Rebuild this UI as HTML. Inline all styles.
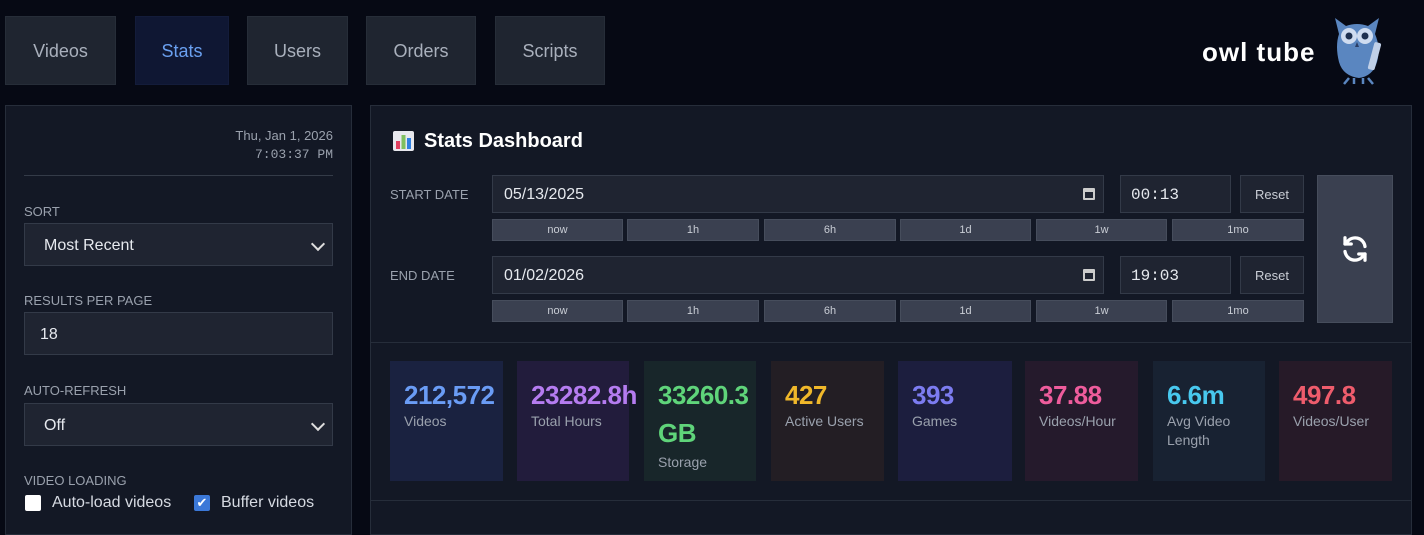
<!DOCTYPE html><html><head><style>
*{box-sizing:border-box;margin:0;padding:0}
body{width:1424px;height:517px;overflow:hidden;background:#060914;font-family:"Liberation Sans",sans-serif;color:#d6dae2;position:relative}
.a{position:absolute}
.nav{position:absolute;top:16px;height:69px;background:#1f2530;border:1px solid #262d38;color:#a9b0bc;font-size:18px;display:flex;align-items:center;justify-content:center;padding-top:2px}
.panel{position:absolute;background:#131825;border:1px solid #262d3a}
.lbl{position:absolute;font-size:13px;color:#9aa1ad;text-transform:uppercase}
.fld{position:absolute;background:#1f2431;border:1px solid #333a48;color:#e6e9ee;font-size:16px;display:flex;align-items:center;padding-left:19px;padding-top:2px}
.chev{position:absolute;right:9px;top:50%;width:10px;height:10px;border-right:2px solid #ddd;border-bottom:2px solid #ddd;transform:translateY(-60%) rotate(45deg)}
.q{position:absolute;height:22px;background:#3a4050;border:1px solid #464d5c;color:#c9cdd5;font-size:11px;display:flex;align-items:center;justify-content:center}
.btn{position:absolute;background:#1f2431;border:1px solid #333a48;color:#c9cdd5;font-size:13px;display:flex;align-items:center;justify-content:center}
.card{position:absolute;top:361px;height:120px;padding:18px 0 0 14px}
.card b{display:block;font-size:26px;line-height:32px;letter-spacing:-0.5px}
.card span{display:block;font-size:14px;color:#9aa1ad;line-height:19px;margin-top:1px}
.mono{font-family:"Liberation Mono",monospace}
</style></head><body>
<div class="nav" style="left:5px;width:111px">Videos</div>
<div class="nav" style="left:135px;width:94px;background:#0f1733;border-color:#131c3a;color:#6aa0f0">Stats</div>
<div class="nav" style="left:247px;width:101px">Users</div>
<div class="nav" style="left:366px;width:110px">Orders</div>
<div class="nav" style="left:495px;width:110px">Scripts</div>
<div class="a" style="left:1202px;top:37px;font-size:26px;font-weight:bold;color:#fff;letter-spacing:1px">owl tube</div>
<svg class="a" style="left:1330px;top:16px" width="58" height="70" viewBox="0 0 56 70">
<path d="M4 2 L15 10 Q26 6 37 10 L48 2 L44 18 Q50 32 46 46 Q42 60 28 62 Q12 60 8 46 Q4 30 8 18 Z" fill="#5a86c0"/>
<circle cx="18" cy="20" r="8" fill="#cfdcf0"/><circle cx="34" cy="20" r="8" fill="#cfdcf0"/>
<circle cx="18" cy="20" r="3.5" fill="#1e3050"/><circle cx="34" cy="20" r="3.5" fill="#1e3050"/>
<path d="M26 26 L24 31 L28 31 Z" fill="#2a3e66"/>
<rect x="40" y="26" width="7" height="28" rx="2" fill="#c0d0e8" transform="rotate(15 43 40)"/>
<path d="M18 62 L13 68 M23 62 L23 68 M32 62 L32 68 M37 62 L42 68" stroke="#5a86c0" stroke-width="2.5"/>
</svg>

<div class="panel" style="left:5px;top:105px;width:347px;height:430px"></div>
<div class="a" style="right:1091px;top:127px;text-align:right;font-size:13px;color:#9aa1ad;line-height:18px">Thu, Jan 1, 2026<br><span class="mono">7:03:37 PM</span></div>
<div class="a" style="left:24px;top:175px;width:309px;height:1px;background:#343b48"></div>
<div class="lbl" style="left:24px;top:204px">Sort</div>
<div class="fld" style="left:24px;top:223px;width:309px;height:43px">Most Recent<i class="chev"></i></div>
<div class="lbl" style="left:24px;top:293px">Results per page</div>
<div class="fld" style="left:24px;top:312px;width:309px;height:43px;padding-left:15px">18</div>
<div class="lbl" style="left:24px;top:383px">Auto-refresh</div>
<div class="fld" style="left:24px;top:403px;width:309px;height:43px">Off<i class="chev"></i></div>
<div class="lbl" style="left:24px;top:473px">Video loading</div>
<div class="a" style="left:25px;top:495px;width:16px;height:16px;background:#fff;border-radius:2px"></div>
<div class="a" style="left:52px;top:494px;font-size:16px">Auto-load videos</div>
<div class="a" style="left:194px;top:495px;width:16px;height:16px;background:#3b78d8;border-radius:2px;color:#fff;font-size:13px;text-align:center;line-height:16px">✔</div>
<div class="a" style="left:221px;top:494px;font-size:16px">Buffer videos</div>

<div class="panel" style="left:370px;top:105px;width:1042px;height:430px"></div>
<svg class="a" style="left:393px;top:131px" width="21" height="20"><rect width="21" height="20" rx="2" fill="#e8e8ee"/><rect x="3" y="10" width="4" height="8" fill="#e04060"/><rect x="8.5" y="4" width="4" height="14" fill="#80c060"/><rect x="14" y="7" width="4" height="11" fill="#3080e0"/></svg>
<div class="a" style="left:424px;top:130px;font-size:20px;font-weight:bold;color:#fff">Stats Dashboard</div>
<div class="lbl" style="left:390px;top:187px">Start date</div>
<div class="fld" style="left:492px;top:175px;width:612px;height:38px;padding-left:11px">05/13/2025<span class="a" style="right:8px;top:12px;width:12px;height:12px;border:2px solid #ccc;border-top-width:4px;border-radius:1px"></span></div>
<div class="fld mono" style="left:1120px;top:175px;width:111px;height:38px;padding-left:10px;font-size:16px">00:13</div>
<div class="btn" style="left:1240px;top:175px;width:64px;height:38px">Reset</div>
<div class="lbl" style="left:390px;top:268px">End date</div>
<div class="fld" style="left:492px;top:256px;width:612px;height:38px;padding-left:11px">01/02/2026<span class="a" style="right:8px;top:12px;width:12px;height:12px;border:2px solid #ccc;border-top-width:4px;border-radius:1px"></span></div>
<div class="fld mono" style="left:1120px;top:256px;width:111px;height:38px;padding-left:10px">19:03</div>
<div class="btn" style="left:1240px;top:256px;width:64px;height:38px">Reset</div>
<div class="q" style="left:492px;top:219px;width:131px">now</div><div class="q" style="left:627px;top:219px;width:132px">1h</div><div class="q" style="left:764px;top:219px;width:132px">6h</div><div class="q" style="left:900px;top:219px;width:131px">1d</div><div class="q" style="left:1036px;top:219px;width:131px">1w</div><div class="q" style="left:1172px;top:219px;width:132px">1mo</div>
<div class="q" style="left:492px;top:300px;width:131px">now</div><div class="q" style="left:627px;top:300px;width:132px">1h</div><div class="q" style="left:764px;top:300px;width:132px">6h</div><div class="q" style="left:900px;top:300px;width:131px">1d</div><div class="q" style="left:1036px;top:300px;width:131px">1w</div><div class="q" style="left:1172px;top:300px;width:132px">1mo</div>
<div class="a" style="left:1317px;top:175px;width:76px;height:148px;background:#3a4050;border:1px solid #464d5c"></div>
<svg class="a" style="left:1340px;top:234px" width="30" height="30" viewBox="0 0 24 24" fill="none" stroke="#fff" stroke-width="2.6" stroke-linecap="round" stroke-linejoin="round"><path d="M20 10A8 8 0 0 0 5.5 6.5L4 8"/><path d="M4 3v5h5"/><path d="M4 14a8 8 0 0 0 14.5 3.5L20 16"/><path d="M20 21v-5h-5"/></svg>
<div class="a" style="left:371px;top:342px;width:1040px;height:1px;background:#262d3a"></div>
<div class="card" style="left:390px;width:113px;background:#1a2240"><b style="color:#6a9cf5">212,572</b><span>Videos</span></div>
<div class="card" style="left:517px;width:112px;background:#221c3c"><b style="color:#b57cf0;white-space:nowrap">23282.8h</b><span>Total Hours</span></div>
<div class="card" style="left:644px;width:112px;background:#18262a"><b style="color:#5fd47a;white-space:nowrap;line-height:38px;margin-top:-3px">33260.3<br>GB</b><span>Storage</span></div>
<div class="card" style="left:771px;width:113px;background:#231e24"><b style="color:#f0b82a">427</b><span>Active Users</span></div>
<div class="card" style="left:898px;width:114px;background:#1c1e3e"><b style="color:#7c7cf0">393</b><span>Games</span></div>
<div class="card" style="left:1025px;width:113px;background:#251a2c"><b style="color:#ee5c9c">37.88</b><span>Videos/Hour</span></div>
<div class="card" style="left:1153px;width:112px;background:#182232"><b style="color:#48c8ee">6.6m</b><span>Avg Video<br>Length</span></div>
<div class="card" style="left:1279px;width:113px;background:#261a28"><b style="color:#ee5c6c">497.8</b><span>Videos/User</span></div>
<div class="a" style="left:371px;top:500px;width:1040px;height:1px;background:#262d3a"></div>
</body></html>
